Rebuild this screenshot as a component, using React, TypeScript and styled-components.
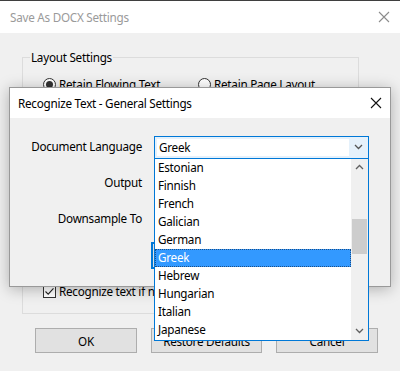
import React, { FC } from 'react';
import styled, { createGlobalStyle } from 'styled-components';

const GlobalStyle = createGlobalStyle`
  html, body {
    margin: 0;
    padding: 0;
    background: #f0f0f0;
  }
  body {
    font-family: "Noto Sans", "Open Sans", sans-serif;
    font-size: 11.7px;
    letter-spacing: -0.25px;
    color: #000;
  }
`;

const languages = [
  'Estonian',
  'Finnish',
  'French',
  'Galician',
  'German',
  'Greek',
  'Hebrew',
  'Hungarian',
  'Italian',
  'Japanese',
];

const Window = styled.div`
  position: relative;
  width: 400px;
  height: 371px;
  box-sizing: border-box;
  background: #f0f0f0;
  border-top: 1px solid #3f3f3f;
  overflow: hidden;
`;

const TitleBar = styled.div<{ $height: number; $inset: number }>`
  height: ${(p) => p.$height}px;
  background: #fff;
  display: flex;
  align-items: center;
  justify-content: space-between;
  padding: 0 ${(p) => p.$inset}px 0 ${(p) => p.$inset}px;
  flex-shrink: 0;
`;

const TitleText = styled.span<{ $muted?: boolean }>`
  color: ${(p) => (p.$muted ? '#9a9a9a' : '#000')};
  line-height: 16px;
`;

const CloseGlyph: FC<{ color: string }> = ({ color }) => (
  <svg width="12" height="12" viewBox="0 0 12 12">
    <path d="M1 1 L11 11 M11 1 L1 11" stroke={color} strokeWidth="1.1" fill="none" />
  </svg>
);

const Body = styled.div`
  padding: 16px 22px 0 22px;
`;

const Group = styled.fieldset`
  margin: 0;
  width: 337px;
  height: 265px;
  box-sizing: border-box;
  border: 1px solid #dcdcdc;
  padding: 11px 0 14px 7px;
  display: flex;
  flex-direction: column;
  justify-content: space-between;
`;

const Legend = styled.legend`
  padding: 0 1px;
  line-height: 16px;
`;

const OptionRow = styled.div`
  display: flex;
  align-items: center;
  margin-left: 13px;
  line-height: 16px;
  gap: 3px;
`;

const OptionLabel = styled.span<{ $width?: number }>`
  width: ${(p) => (p.$width ? `${p.$width}px` : 'auto')};
  white-space: nowrap;
`;

const Radio = styled.span<{ $checked?: boolean }>`
  width: 13px;
  height: 13px;
  box-sizing: border-box;
  border: 1px solid #333;
  border-radius: 50%;
  background: #fff;
  display: inline-flex;
  align-items: center;
  justify-content: center;
  &::after {
    content: '';
    width: 7px;
    height: 7px;
    border-radius: 50%;
    background: ${(p) => (p.$checked ? '#333' : 'transparent')};
  }
`;

const CheckBox = styled.span`
  width: 13px;
  height: 13px;
  box-sizing: border-box;
  border: 1px solid #333;
  background: #fff;
  display: inline-flex;
  align-items: center;
  justify-content: center;
`;

const ButtonRow = styled.div`
  display: flex;
  gap: 14px;
  margin: 14px 0 0 13px;
`;

const Button = styled.div<{ $width: number }>`
  width: ${(p) => p.$width}px;
  height: 25px;
  box-sizing: border-box;
  background: #e1e1e1;
  border: 1px solid #adadad;
  display: flex;
  align-items: center;
  justify-content: center;
`;

/* front dialog */

const Dialog = styled.div`
  position: absolute;
  left: 9px;
  top: 86px;
  width: 382px;
  height: 200px;
  box-sizing: border-box;
  border: 1px solid #999;
  background: #f0f0f0;
  box-shadow: 0 2px 14px rgba(0, 0, 0, 0.28);
  display: flex;
  flex-direction: column;
`;

const Form = styled.div`
  display: grid;
  grid-template-columns: 111px 215px;
  grid-auto-rows: 24px;
  column-gap: 12px;
  row-gap: 12px;
  padding: 17px 0 0 21px;
  align-items: center;
`;

const FieldLabel = styled.span`
  justify-self: end;
  white-space: nowrap;
  line-height: 16px;
  padding-bottom: 2px;
`;

const Combo = styled.div`
  position: relative;
  height: 23px;
  box-sizing: border-box;
  border: 1px solid #0078d7;
  background: #e5f1fb;
  display: flex;
  align-items: stretch;
`;

const ComboEdit = styled.div`
  flex: 1;
  margin: 2px 0 2px 2px;
  background: #fff;
  padding: 0 0 1px 2px;
  display: flex;
  align-items: center;
`;

const ComboButton = styled.div`
  width: 19px;
  display: flex;
  align-items: center;
  justify-content: center;
`;

const PlainCombo = styled.div`
  height: 23px;
  box-sizing: border-box;
  border: 1px solid #adadad;
  background: #fff;
`;

const FocusBox = styled.div`
  height: 27px;
  width: 110px;
  margin-left: -3px;
  box-sizing: border-box;
  border: 2px solid #0078d7;
  background: #e1e1e1;
`;

const DropList = styled.div`
  position: absolute;
  left: -1px;
  top: 21px;
  width: 215px;
  height: 183px;
  box-sizing: border-box;
  border: 1px solid #0078d7;
  background: #fff;
  display: flex;
  z-index: 2;
`;

const Items = styled.div`
  flex: 1;
  display: flex;
  flex-direction: column;
`;

const Item = styled.div<{ $selected?: boolean }>`
  height: 18px;
  box-sizing: border-box;
  padding: 0 0 1px 2px;
  line-height: 16px;
  display: flex;
  align-items: center;
  background: ${(p) => (p.$selected ? '#3399ff' : 'transparent')};
  color: ${(p) => (p.$selected ? '#fff' : '#000')};
  border: 1px dotted ${(p) => (p.$selected ? '#1d4f86' : 'transparent')};
`;

const ScrollBar = styled.div`
  width: 17px;
  background: #f0f0f0;
  display: flex;
  flex-direction: column;
`;

const ScrollArrow = styled.div`
  height: 17px;
  display: flex;
  align-items: center;
  justify-content: center;
`;

const ScrollTrack = styled.div`
  flex: 1;
  padding-top: 43px;
`;

const ScrollThumb = styled.div`
  height: 35px;
  margin: 0 1px;
  background: #cdcdcd;
`;

const Chevron: FC<{ up?: boolean; color?: string }> = ({ up, color = '#606060' }) => (
  <svg width="9" height="6" viewBox="0 0 9 6">
    <path
      d={up ? 'M1 5 L4.5 1.5 L8 5' : 'M1 1 L4.5 4.5 L8 1'}
      stroke={color}
      strokeWidth="1.3"
      fill="none"
    />
  </svg>
);

const App: FC = () => {
  return (
    <>
      <GlobalStyle />
      <Window>
        <TitleBar $height={32} $inset={10}>
          <TitleText $muted>Save As DOCX Settings</TitleText>
          <CloseGlyph color="#8c8c8c" />
        </TitleBar>
        <Body>
          <Group>
            <Legend>Layout Settings</Legend>
            <OptionRow>
              <Radio $checked />
              <OptionLabel $width={136}>Retain Flowing Text</OptionLabel>
              <Radio />
              <OptionLabel>Retain Page Layout</OptionLabel>
            </OptionRow>
            <OptionRow>
              <CheckBox>
                <svg width="11" height="11" viewBox="0 0 11 11">
                  <path d="M1.5 5.5 L4.2 8.2 L9.5 2.3" stroke="#222" strokeWidth="1.1" fill="none" />
                </svg>
              </CheckBox>
              <OptionLabel>Recognize text if needed</OptionLabel>
            </OptionRow>
          </Group>
          <ButtonRow>
            <Button $width={102}>OK</Button>
            <Button $width={111}>Restore Defaults</Button>
            <Button $width={102}>Cancel</Button>
          </ButtonRow>
        </Body>

        <Dialog>
          <TitleBar $height={30} $inset={8}>
            <TitleText>Recognize Text - General Settings</TitleText>
            <CloseGlyph color="#111" />
          </TitleBar>
          <Form>
            <FieldLabel>Document Language</FieldLabel>
            <Combo>
              <ComboEdit>Greek</ComboEdit>
              <ComboButton>
                <Chevron color="#555" />
              </ComboButton>
              <DropList>
                <Items>
                  {languages.map((lang) => (
                    <Item key={lang} $selected={lang === 'Greek'}>
                      {lang}
                    </Item>
                  ))}
                </Items>
                <ScrollBar>
                  <ScrollArrow>
                    <Chevron up />
                  </ScrollArrow>
                  <ScrollTrack>
                    <ScrollThumb />
                  </ScrollTrack>
                  <ScrollArrow>
                    <Chevron />
                  </ScrollArrow>
                </ScrollBar>
              </DropList>
            </Combo>
            <FieldLabel>Output</FieldLabel>
            <PlainCombo />
            <FieldLabel>Downsample To</FieldLabel>
            <PlainCombo />
            <span />
            <FocusBox />
          </Form>
        </Dialog>
      </Window>
    </>
  );
};

export default App;
